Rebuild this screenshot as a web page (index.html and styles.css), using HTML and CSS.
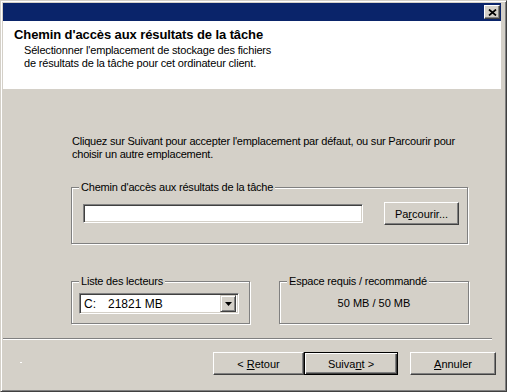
FILE: index.html
```html
<!DOCTYPE html>
<html lang="fr">
<head>
    <meta charset="UTF-8">
    <title>Chemin d'accès aux résultats de la tâche</title>
    <link rel="stylesheet" href="styles.css">
</head>
<body>
    <div class="window">
        <div class="title-bar">
            <span class="close-btn">
                <svg width="9" height="7" viewBox="0 0 9 7"><path d="M1 0.5 L8 6.5 M8 0.5 L1 6.5" stroke="#000" stroke-width="1.7" fill="none"/></svg>
            </span>
        </div>

        <div class="wizard-header">
            <h1>Chemin d'accès aux résultats de la tâche</h1>
            <p>Sélectionner l'emplacement de stockage des fichiers<br>de résultats de la tâche pour cet ordinateur client.</p>
        </div>

        <div class="wizard-body">
            <p class="intro">Cliquez sur Suivant pour accepter l'emplacement par défaut, ou sur Parcourir pour<br>choisir un autre emplacement.</p>

            <div class="group group-path">
                <span class="group-label">Chemin d'accès aux résultats de la tâche</span>
                <div class="path-row">
                    <div class="textbox"></div>
                    <button class="btn btn-browse">Pa<u>r</u>courir...</button>
                </div>
            </div>

            <div class="group-row">
                <div class="group group-drives">
                    <span class="group-label">Liste des lecteurs</span>
                    <div class="combo">
                        <span class="combo-drive">C:</span>
                        <span class="combo-size">21821 MB</span>
                        <span class="combo-arrow">
                            <svg width="7" height="4" viewBox="0 0 7 4"><polygon points="0,0 7,0 3.5,4" fill="#000"/></svg>
                        </span>
                    </div>
                </div>
                <div class="group group-space">
                    <span class="group-label">Espace requis / recommandé</span>
                    <div class="space-value">50 MB / 50 MB</div>
                </div>
            </div>
        </div>

        <div class="separator"></div>

        <div class="wizard-footer">
            <span class="stray-dot"></span>
            <button class="btn btn-back">&lt; <u>R</u>etour</button>
            <button class="btn btn-next">Suiva<u>n</u>t &gt;</button>
            <button class="btn btn-cancel"><u>A</u>nnuler</button>
        </div>
    </div>
</body>
</html>
```

FILE: styles.css
```css
html, body {
    margin: 0;
    padding: 0;
    background: #d4d0c8;
}

body {
    font-family: "Liberation Sans", Arial, sans-serif;
    font-size: 11px;
    color: #000;
}

.window {
    box-sizing: border-box;
    width: 507px;
    height: 392px;
    display: flex;
    flex-direction: column;
    background: #d4d0c8;
    border: 1px solid;
    border-color: #d4d0c8 #404040 #404040 #d4d0c8;
    box-shadow: inset 1px 1px 0 #fff, inset -1px -1px 0 #808080;
    padding: 2px 5px 2px 2px;
}

.title-bar {
    height: 18px;
    background: #0a246a;
    display: flex;
    justify-content: flex-end;
    align-items: flex-start;
}

.close-btn {
    box-sizing: border-box;
    width: 16px;
    height: 14px;
    margin: 2px 1px 0 0;
    background: #d4d0c8;
    border: 1px solid;
    border-color: #fff #404040 #404040 #fff;
    box-shadow: inset -1px -1px 0 #808080;
    display: flex;
    align-items: center;
    justify-content: center;
}

.wizard-header {
    height: 68px;
    box-sizing: border-box;
    background: #fff;
    padding: 6px 0 0 11px;
}

.wizard-header h1 {
    margin: 0;
    font-size: 13px;
    line-height: 16px;
    font-weight: bold;
    letter-spacing: -0.1px;
}

.wizard-header p {
    margin: 1px 0 0 10px;
    line-height: 13px;
    letter-spacing: -0.17px;
}

.wizard-body {
    height: 249px;
    box-sizing: border-box;
    padding: 46px 0 0 68px;
    display: flex;
    flex-direction: column;
    align-items: flex-start;
}

.intro {
    margin: 0 0 0 1px;
    line-height: 13px;
    white-space: nowrap;
    letter-spacing: -0.22px;
}

.group {
    box-sizing: border-box;
    display: flex;
    flex-direction: column;
    align-items: flex-start;
    border: 1px solid #808080;
    box-shadow: 1px 1px 0 #fff, inset 1px 1px 0 #fff;
}

.group-label {
    display: block;
    margin: -7px 0 0 7px;
    padding: 0 2px;
    line-height: 13px;
    background: #d4d0c8;
    white-space: nowrap;
    letter-spacing: -0.2px;
}

.group-path {
    width: 397px;
    height: 57px;
    margin-top: 26px;
}

.path-row {
    display: flex;
    align-items: center;
    margin: 8px 0 0 11px;
}

.textbox {
    box-sizing: border-box;
    width: 280px;
    height: 19px;
    background: #fff;
    border: 1px solid;
    border-color: #808080 #fff #fff #808080;
    box-shadow: inset 1px 1px 0 #404040, inset -1px -1px 0 #d4d0c8;
}

.btn {
    box-sizing: border-box;
    height: 23px;
    padding: 0;
    background: #d4d0c8;
    font-family: "Liberation Sans", Arial, sans-serif;
    font-size: 11px;
    color: #000;
    border: 1px solid;
    border-color: #fff #404040 #404040 #fff;
    box-shadow: inset -1px -1px 0 #808080;
    border-radius: 0;
}

.btn-browse {
    width: 75px;
    margin-left: 21px;
}

.group-row {
    display: flex;
    margin-top: 37px;
}

.group-drives {
    width: 179px;
    height: 43px;
}

.group-space {
    width: 190px;
    height: 43px;
    margin-left: 29px;
    align-items: stretch;
}

.group-space .group-label {
    align-self: flex-start;
}

.combo {
    box-sizing: border-box;
    width: 160px;
    height: 21px;
    margin: 5px 0 0 7px;
    display: flex;
    align-items: center;
    background: #fff;
    border: 1px solid;
    border-color: #808080 #fff #fff #808080;
    box-shadow: inset 1px 1px 0 #404040, inset -1px -1px 0 #d4d0c8;
    padding: 2px;
    font-size: 12px;
}

.combo-drive {
    margin-left: 2px;
    width: 24px;
}

.combo-size {
    flex: 1;
}

.combo-arrow {
    box-sizing: border-box;
    width: 16px;
    height: 17px;
    background: #d4d0c8;
    border: 1px solid;
    border-color: #d4d0c8 #404040 #404040 #d4d0c8;
    box-shadow: inset 1px 1px 0 #fff, inset -1px -1px 0 #808080;
    display: flex;
    align-items: center;
    justify-content: center;
}

.space-value {
    margin-top: 9px;
    line-height: 13px;
    text-align: center;
}

.separator {
    height: 0;
    border-top: 1px solid #808080;
    border-bottom: 1px solid #fff;
    margin-right: 9px;
}

.wizard-footer {
    flex: 1;
    display: flex;
    align-items: flex-start;
    padding: 12px 5px 0 0;
}

.stray-dot {
    width: 2px;
    height: 1px;
    background: #fff;
    margin: 10px 0 0 17px;
}

.btn-back {
    width: 91px;
    margin-left: auto;
}

.btn-next {
    width: 94px;
    border: 1px solid #000;
    box-shadow: inset 1px 1px 0 #fff, inset -1px -1px 0 #404040, inset -2px -2px 0 #808080;
}

.btn-cancel {
    width: 86px;
    margin-left: 12px;
}
```
